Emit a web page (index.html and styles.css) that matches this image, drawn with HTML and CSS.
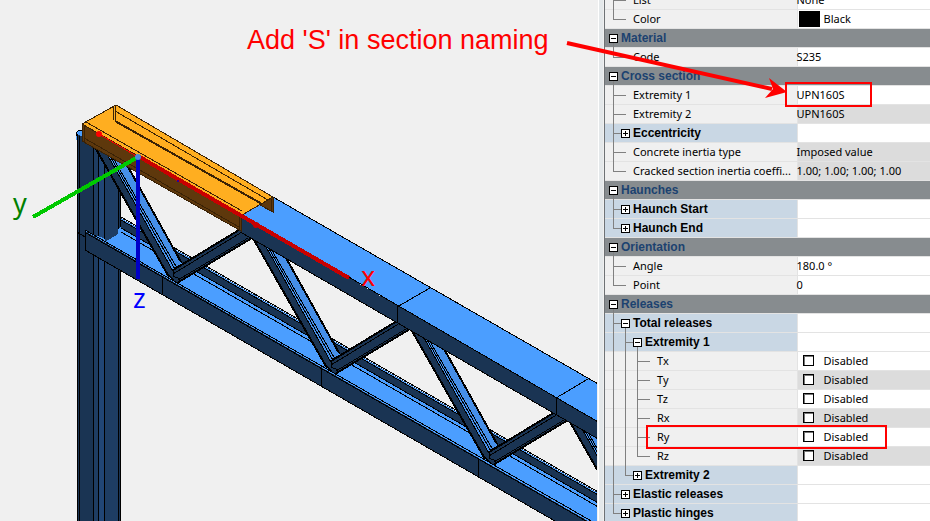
FILE: index.html
```html
<!DOCTYPE html>
<html lang="en">
<head>
<meta charset="utf-8">
<title>Section properties</title>
<link rel="stylesheet" href="styles.css">
</head>
<body>
<main class="window">
  <section class="viewport" aria-label="3D model">
    <svg class="scene" viewBox="0 0 597 521" preserveAspectRatio="xMinYMin slice" role="img" aria-label="Truss with highlighted member">
      <defs>
        <g id="web">
          <path class="pale" d="M260 236 286 258 339 353 333 365 327 366Z"/>
          <path class="navy" d="M250 233 262 240 332 364 327 368Z"/>
          <path class="edge thick" d="M250 233 327 368M280 247 339 353"/>
          <path class="edge" d="M261 238 332 364M264 240 334 362M267 242 335 359"/>
          <path class="navy" d="M331 361 397 321 410 329 335 374 328 368Z"/>
          <path class="edge thick" d="M331 361 397 321M335 374 410 329"/>
          <path class="edge" d="M331 365 400 323M336 371 406 329M331 361V367L338 370M327 366 333 373"/>
        </g>
      </defs>

      <!-- column -->
      <path class="blue" d="M76 136V133L79 131H86V140H76Z"/>
      <path class="edge" d="M76 136V133L79 130H84"/>
      <path class="navy" d="M77 134 121 158V521H77Z"/>
      <path class="steel" d="M94 140H99V521H94Z"/>
      <path class="steel-light" d="M99 140H105V521H99Z"/>
      <path class="steel" d="M105 140H119V521H105Z"/>
      <path class="edge" d="M77.500 134V521M79.500 136V521M93.500 140V521M98.500 140V521M104.500 140V521M118.500 150V521M120.500 150V521M77 232 85 237"/>

      <!-- lower chord: back flange and floor -->
      <path class="blue" d="M85 231 108 240 121 226 600 502V530L587 521Z"/>
      <path class="navy" d="M121 218 600 494V504L121 228Z"/>
      <path class="edge" d="M121 217 600 493M121 228 600 504M121 232 600 508"/>
      <path class="blue-line" d="M121 219 600 495"/>
      <path class="edge" d="M121 220 600 496"/>
      <path class="steel" d="M105 200H118V234L105 242Z"/>

      <!-- diagonals -->
      <use href="#web" x="-158" y="-91"/>
      <use href="#web"/>
      <use href="#web" x="158" y="91"/>
      <use href="#web" x="316" y="182"/>

      <!-- lower chord: front face -->
      <path class="navy" d="M85 231 600 528V547L85 250Z"/>
      <path class="blue-line" d="M86 231 600 527"/>
      <path class="edge" d="M85 250V230L600 526M86 233 600 529M85 250 600 547M162.500 276V294M321.500 368V386M478.500 459V477"/>

      <!-- upper chord -->
      <path class="blue" d="M242 215 273 197 600 385V424Z"/>
      <path class="navy" d="M242 216 600 423V440L242 233Z"/>
      <path class="edge" d="M273 197 600 385M242 215 600 423M242 233 600 440M397.500 307V323M556.500 398V414M397 307 430 288M556 398 588 379"/>

      <!-- selected channel -->
      <path class="brown" d="M82 124 242 215V231L82 141Z"/>
      <path class="orange" d="M82 124 116 105 273 197 242 215Z"/>
      <path class="brown" d="M260 205 273 197V212Z"/>
      <path class="umber" d="M82 141V124L116 105 273 197V212L260 205M82 124 241 215V231L82 141M84.500 126V142M239.500 215V230M84 138 239 227M115.500 106V121M113.500 107V120M86 122 242 211M115 111 268 200M271.500 199V211M242 215 273 197"/>
      <path class="umber thick" d="M115 121 262 204"/>

      <!-- local axes -->
      <path class="axis-thin" d="M99 134 138 157"/>
      <path class="axis-x" d="M138 156 349 278"/>
      <circle class="node-red" cx="99" cy="134" r="3"/>
      <circle class="node-dark" cx="256" cy="225" r="3"/>
      <circle class="node-blue" cx="178" cy="181" r="1"/>
      <path class="axis-y" d="M138 157 33 217"/>
      <path class="axis-z" d="M138 157V279"/>
      <circle class="node-origin" cx="138" cy="157" r="3"/>
      <text class="axis-label label-x" x="361" y="286">x</text>
      <text class="axis-label label-y" x="13" y="213">y</text>
      <text class="axis-label label-z" x="133" y="308">z</text>
    </svg>
  </section>

  <section class="panel" aria-label="Properties">
    <table class="grid">
      <colgroup><col class="col-name"><col></colgroup>
      <tbody>
        <tr><th scope="row"><div class="name"><i class="tee"></i><i class="leaf"></i>List</div></th><td><div class="value">None</div></td></tr>
        <tr><th scope="row"><div class="name"><i class="end"></i><i class="leaf"></i>Color</div></th><td><div class="value"><span class="swatch"></span>Black</div></td></tr>
        <tr class="category"><th scope="rowgroup" colspan="2"><div class="name"><button class="toggle" aria-label="Collapse Material"></button>Material</div></th></tr>
        <tr><th scope="row"><div class="name"><i class="end"></i><i class="leaf"></i>Code</div></th><td><div class="value">S235</div></td></tr>
        <tr class="category"><th scope="rowgroup" colspan="2"><div class="name"><button class="toggle" aria-label="Collapse Cross section"></button>Cross section</div></th></tr>
        <tr><th scope="row"><div class="name"><i class="tee"></i><i class="leaf"></i>Extremity 1</div></th><td><div class="value">UPN160S</div></td></tr>
        <tr class="shaded"><th scope="row"><div class="name"><i class="tee"></i><i class="leaf"></i>Extremity 2</div></th><td><div class="value">UPN160S</div></td></tr>
        <tr class="group"><th scope="row"><div class="name"><i class="tee"></i><button class="toggle closed" aria-label="Expand Eccentricity"></button>Eccentricity</div></th><td></td></tr>
        <tr class="shaded"><th scope="row"><div class="name"><i class="tee"></i><i class="leaf"></i>Concrete inertia type</div></th><td><div class="value">Imposed value</div></td></tr>
        <tr class="shaded"><th scope="row"><div class="name"><i class="end"></i><i class="leaf"></i>Cracked section inertia coeffi...</div></th><td><div class="value">1.00; 1.00; 1.00; 1.00</div></td></tr>
        <tr class="category"><th scope="rowgroup" colspan="2"><div class="name"><button class="toggle" aria-label="Collapse Haunches"></button>Haunches</div></th></tr>
        <tr class="group"><th scope="row"><div class="name"><i class="tee"></i><button class="toggle closed" aria-label="Expand Haunch Start"></button>Haunch Start</div></th><td></td></tr>
        <tr class="group"><th scope="row"><div class="name"><i class="end"></i><button class="toggle closed" aria-label="Expand Haunch End"></button>Haunch End</div></th><td></td></tr>
        <tr class="category"><th scope="rowgroup" colspan="2"><div class="name"><button class="toggle" aria-label="Collapse Orientation"></button>Orientation</div></th></tr>
        <tr><th scope="row"><div class="name"><i class="tee"></i><i class="leaf"></i>Angle</div></th><td><div class="value">180.0 °</div></td></tr>
        <tr><th scope="row"><div class="name"><i class="end"></i><i class="leaf"></i>Point</div></th><td><div class="value">0</div></td></tr>
        <tr class="category"><th scope="rowgroup" colspan="2"><div class="name"><button class="toggle" aria-label="Collapse Releases"></button>Releases</div></th></tr>
        <tr class="group"><th scope="row"><div class="name"><i class="tee"></i><button class="toggle" aria-label="Collapse Total releases"></button>Total releases</div></th><td></td></tr>
        <tr class="group"><th scope="row"><div class="name"><i class="bar"></i><i class="tee"></i><button class="toggle" aria-label="Collapse Extremity 1"></button>Extremity 1</div></th><td></td></tr>
        <tr><th scope="row"><div class="name"><i class="bar"></i><i class="bar"></i><i class="tee"></i><i class="leaf"></i>Tx</div></th><td><label class="value check"><input type="checkbox">Disabled</label></td></tr>
        <tr class="shaded"><th scope="row"><div class="name"><i class="bar"></i><i class="bar"></i><i class="tee"></i><i class="leaf"></i>Ty</div></th><td><label class="value check"><input type="checkbox">Disabled</label></td></tr>
        <tr><th scope="row"><div class="name"><i class="bar"></i><i class="bar"></i><i class="tee"></i><i class="leaf"></i>Tz</div></th><td><label class="value check"><input type="checkbox">Disabled</label></td></tr>
        <tr class="shaded"><th scope="row"><div class="name"><i class="bar"></i><i class="bar"></i><i class="tee"></i><i class="leaf"></i>Rx</div></th><td><label class="value check"><input type="checkbox">Disabled</label></td></tr>
        <tr><th scope="row"><div class="name"><i class="bar"></i><i class="bar"></i><i class="tee"></i><i class="leaf"></i>Ry</div></th><td><label class="value check"><input type="checkbox">Disabled</label></td></tr>
        <tr class="shaded"><th scope="row"><div class="name"><i class="bar"></i><i class="bar"></i><i class="end"></i><i class="leaf"></i>Rz</div></th><td><label class="value check"><input type="checkbox">Disabled</label></td></tr>
        <tr class="group"><th scope="row"><div class="name"><i class="bar"></i><i class="end"></i><button class="toggle closed" aria-label="Expand Extremity 2"></button>Extremity 2</div></th><td></td></tr>
        <tr class="group"><th scope="row"><div class="name"><i class="tee"></i><button class="toggle closed" aria-label="Expand Elastic releases"></button>Elastic releases</div></th><td></td></tr>
        <tr class="group"><th scope="row"><div class="name"><i class="end"></i><button class="toggle closed" aria-label="Expand Plastic hinges"></button>Plastic hinges</div></th><td></td></tr>
      </tbody>
    </table>
  </section>

  <svg class="notes" viewBox="0 0 930 521" preserveAspectRatio="xMaxYMin slice">
    <text class="note" x="247" y="49">Add 'S' in section naming</text>
    <path class="arrow-line" d="M567 43 772 89"/>
    <path class="arrow-head" d="M787 92 765 98 773 89 769 78Z"/>
    <rect class="frame" x="786" y="83" width="85" height="23"/>
    <rect class="frame" x="647" y="426" width="239" height="22"/>
  </svg>
</main>
</body>
</html>
```
FILE: styles.css
```css
* { box-sizing: border-box; }

body {
  margin: 0;
  background: #f0f0f0;
  color: #000;
  font: 11px/18px "Noto Sans", "Open Sans", sans-serif;
}

.window {
  position: relative;
  display: flex;
  height: 100vh;
  overflow: hidden;
}

.viewport {
  flex: 1;
  min-width: 0;
  overflow: hidden;
}

.scene {
  display: block;
  width: 100%;
  height: 100%;
}

.scene path { shape-rendering: crispEdges; }

.blue { fill: #4b9eff; }
.pale { fill: #468fe8; }
.navy { fill: #1a3453; }
.steel { fill: #1e3d63; }
.steel-light { fill: #214676; }
.orange { fill: #ffae20; }
.brown { fill: #5e380c; }
.edge { fill: none; stroke: #000; stroke-width: 1; }
.umber { fill: none; stroke: #3a2206; stroke-width: 1; }
.blue-line { fill: none; stroke: #4b9eff; stroke-width: 1; }
.scene .thick { stroke-width: 2; }

.axis-thin { stroke: #f00000; stroke-width: 1; }
.axis-x { stroke: #c80000; stroke-width: 4; }
.axis-y { stroke: #00c800; stroke-width: 4; }
.axis-z { stroke: #0000c8; stroke-width: 4; }
.node-red { fill: #f00; }
.node-dark { fill: #c80000; }
.node-blue { fill: #0000c8; }
.node-origin { fill: #4a8cdc; }

.axis-label { font-size: 27px; }
.label-x { fill: #f00; }
.label-y { fill: #008000; }
.label-z { fill: #00f; }

.panel {
  flex: 0 0 333px;
  overflow: hidden;
  padding-left: 7px;
  background: linear-gradient(to right, #f0f0f0 1px, #fff 1px 2px, #e4e8ea 2px 6px, #f0f0f0 6px);
}

.grid {
  width: 100%;
  margin-top: -9px;
  border-collapse: collapse;
  table-layout: fixed;
  border-left: 1px solid #6e7275;
}

.col-name { width: 192px; }

.grid th,
.grid td {
  height: 19px;
  padding: 0;
  text-align: left;
  font-weight: normal;
  white-space: nowrap;
}

.grid th { background: linear-gradient(#e3e3e3, #e3e3e3) bottom / 100% 1px no-repeat #f0f0f0; }
.grid td { background: linear-gradient(#e3e3e3, #e3e3e3) bottom / 100% 1px no-repeat, linear-gradient(#e3e3e3, #e3e3e3) left / 1px 100% no-repeat #fff; }
.grid .shaded td { background-color: #dcdcdc; }
.grid .group th { background-color: #c9d7e4; }
.grid .category th { background-color: #878c8f; color: #1c4270; }

.grid .group th,
.grid .category th {
  font: bold 12px/18px "Liberation Sans", sans-serif;
}

.name {
  display: flex;
  align-items: stretch;
  height: 19px;
  padding-left: 2px;
}

.name i {
  flex: none;
  width: 12px;
  background-repeat: no-repeat;
  background-image: linear-gradient(#808080, #808080), linear-gradient(#808080, #808080);
}

.bar { background-size: 1px 100%, 0 0; background-position: 6px 0, 0 0; }
.tee { background-size: 1px 100%, 6px 1px; background-position: 6px 0, 6px 9px; }
.end { background-size: 1px 10px, 6px 1px; background-position: 6px 0, 6px 9px; }

.name .leaf {
  margin-right: 2px;
  background-size: 7px 1px, 0 0;
  background-position: 0 9px, 0 0;
}

.toggle {
  flex: none;
  width: 12px;
  height: 19px;
  margin: 0 2px 0 0;
  padding: 0;
  border: 0;
  background:
    linear-gradient(#000, #000) 4px 9px / 5px 1px no-repeat,
    linear-gradient(#fff, #fff) 3px 6px / 7px 7px no-repeat,
    linear-gradient(#000, #000) 2px 5px / 9px 9px no-repeat,
    linear-gradient(#808080, #808080) 6px 14px / 1px 5px no-repeat,
    linear-gradient(#808080, #808080) 0 9px / 2px 1px no-repeat;
}

.category .toggle { background-size: 5px 1px, 7px 7px, 9px 9px, 1px 5px, 0 0; }

.closed {
  background:
    linear-gradient(#000, #000) 4px 9px / 5px 1px no-repeat,
    linear-gradient(#000, #000) 6px 7px / 1px 5px no-repeat,
    linear-gradient(#fff, #fff) 3px 6px / 7px 7px no-repeat,
    linear-gradient(#000, #000) 2px 5px / 9px 9px no-repeat,
    linear-gradient(#808080, #808080) 0 9px / 2px 1px no-repeat;
}

.value {
  display: flex;
  align-items: center;
  height: 19px;
  padding: 0 0 2px;
}

.swatch {
  width: 21px;
  height: 16px;
  margin: 1px 4px 0 2px;
  background: #000;
}

.check { padding-left: 6px; }

.check input {
  appearance: none;
  width: 11px;
  height: 11px;
  margin: 0 10px 0 0;
  border: 1px solid #000;
  background: #fff;
  box-shadow: inset 1px 1px #777;
}

.notes {
  position: absolute;
  inset: 0;
  width: 100%;
  height: 100%;
  pointer-events: none;
}

.note {
  fill: #f00;
  font-family: "Liberation Sans", sans-serif;
  font-size: 27px;
}

.arrow-line { stroke: #f00; stroke-width: 4; }
.arrow-head { fill: #f00; }
.frame { fill: none; stroke: #f00; stroke-width: 2; }
```
